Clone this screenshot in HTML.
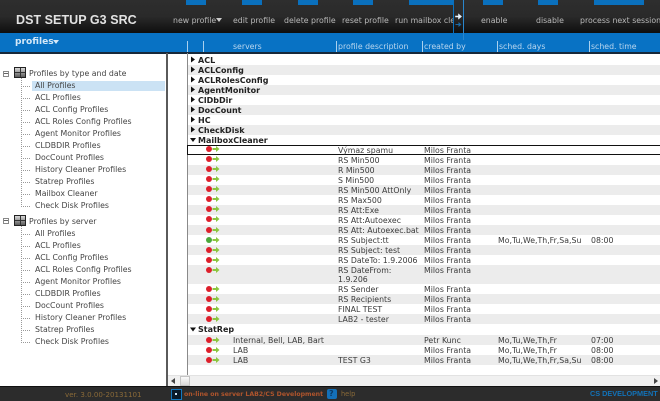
<!DOCTYPE html>
<html><head><meta charset="utf-8">
<style>
html,body{margin:0;padding:0;background:#fff}
#p{position:relative;width:660px;height:401px;overflow:hidden;background:#fff;font:7.8px/10px "DejaVu Sans",sans-serif;color:#3a3a3a}
#p div,#p span,#p svg{position:absolute}
.t{white-space:nowrap}
.n{color:#b8b8b8;top:16px;font-size:7.8px;line-height:10px;text-align:center;white-space:nowrap}
.tab{top:0;height:5px;background:#0a70bd}
.h{top:42px;color:#b9d6ee;font-size:7.8px;line-height:10px;white-space:nowrap}
.hl{top:41px;width:1px;height:11px;background:#a9d0ee}
.r{left:188px;width:472px;height:10px}
.g{background:#ececec}
.b{left:198px;font-weight:bold;color:#222;font-size:8px;line-height:10px;white-space:nowrap}
.c{white-space:nowrap;line-height:10px}
.s{left:35px;white-space:nowrap;line-height:10px;color:#444}
.dh{height:1px;width:10px;left:21px;background-image:linear-gradient(90deg,#999 50%,transparent 50%);background-size:2px 1px}
.dv{width:1px;left:21px;background-image:linear-gradient(#999 50%,transparent 50%);background-size:1px 2px}
.ic{width:10px;height:9px;background:linear-gradient(#333,#333) 4.500px 0/1px 9px no-repeat,linear-gradient(#333,#333) 0 4px/10px 1px no-repeat,linear-gradient(#d8d8d8,#5a5a5a);border:1px solid #222}
</style></head><body><div id="p">

<div style="left:0;top:0;width:660px;height:33px;background:linear-gradient(#2e2e2e 0,#2a2a2a 50%,#0e0e0e 100%)"></div>
<div class="tab" style="left:186px;width:20px"></div>
<div class="tab" style="left:242px;width:20px"></div>
<div class="tab" style="left:298px;width:20px"></div>
<div class="tab" style="left:353px;width:20px"></div>
<div class="tab" style="left:409px;width:44px"></div>
<div class="tab" style="left:483px;width:20px"></div>
<div class="tab" style="left:538px;width:20px"></div>
<div class="tab" style="left:594px;width:50px"></div>
<div class="t" style="left:16px;top:13px;color:#e2e2e2;font:bold 12.500px/14px 'Liberation Sans',sans-serif;letter-spacing:.05px">DST SETUP G3 SRC</div>
<div class="n" style="left:173px">new profile</div>
<svg style="left:216px;top:18px" width="6" height="4" viewBox="0 0 6 4"><path d="M0 0h6L3 4z" fill="#ccc"/></svg>
<div class="n" style="left:233px">edit profile</div>
<div class="n" style="left:284px">delete profile</div>
<div class="n" style="left:342px">reset profile</div>
<div class="n" style="left:395px;width:58px;overflow:hidden;text-align:left">run mailbox cleaner</div>
<div class="n" style="left:481px">enable</div>
<div class="n" style="left:536px">disable</div>
<div class="n" style="left:580px">process next session</div>

<div style="left:0;top:33px;width:660px;height:19px;background:#0872c4"></div>
<div style="left:0;top:52px;width:660px;height:1.500px;background:#17283a"></div>
<div style="left:453px;top:0;width:1px;height:33px;background:#0a70bd"></div>
<div style="left:463px;top:0;width:1px;height:40px;background:#2a86cc"></div>
<svg style="left:454px;top:12px" width="9" height="18" viewBox="0 0 9 18"><path d="M1.500 4h3V2l3 2.500-3 2.500V5h-3z" fill="#e8f4ff" stroke="#e8f4ff" stroke-width=".6"/><path d="M1.500 12h3v-2l3 2.500-3 2.500v-2h-3z" fill="#1b6aa5"/></svg>
<div class="t" style="left:15px;top:36px;color:#d4e8f8;font:bold 9.100px/12px 'DejaVu Sans',sans-serif">profiles</div>
<svg style="left:53px;top:40px" width="6" height="4" viewBox="0 0 6 4"><path d="M0 0h6L3 4z" fill="#d4e8f8"/></svg>
<div class="hl" style="left:187px"></div><div class="hl" style="left:203px"></div>
<div class="h" style="left:233px">servers</div>
<div class="hl" style="left:336px"></div><div class="h" style="left:338px">profile description</div>
<div class="hl" style="left:422px"></div><div class="h" style="left:424px">created by</div>
<div class="hl" style="left:497px"></div><div class="h" style="left:499px">sched. days</div>
<div class="hl" style="left:589px"></div><div class="h" style="left:591px">sched. time</div>

<!-- sidebar -->
<div style="left:166px;top:53px;width:2px;height:334px;background:#5a5a5a"></div>
<div style="left:32px;top:81px;width:133px;height:10px;background:#cbe2f4"></div>
<div style="left:3px;top:71px;width:4px;height:4px;border:1px solid #888;background:#fff"></div>
<div style="left:4px;top:73px;width:4px;height:1px;background:#666"></div>
<div style="left:3px;top:218px;width:4px;height:4px;border:1px solid #888;background:#fff"></div>
<div style="left:4px;top:220px;width:4px;height:1px;background:#666"></div>
<div class="ic" style="left:14px;top:67px"></div>
<div class="ic" style="left:14px;top:215px"></div>
<div class="s" style="left:29px;top:69px">Profiles by type and date</div>
<div class="s" style="left:29px;top:217px">Profiles by server</div>

<div class="dv" style="top:78px;height:128px"></div>
<div class="dv" style="top:226px;height:116px"></div>
<div class="dh" style="top:86px"></div><div class="s" style="top:81px">All Profiles</div>
<div class="dh" style="top:98px"></div><div class="s" style="top:93px">ACL Profiles</div>
<div class="dh" style="top:110px"></div><div class="s" style="top:105px">ACL Config Profiles</div>
<div class="dh" style="top:122px"></div><div class="s" style="top:117px">ACL Roles Config Profiles</div>
<div class="dh" style="top:134px"></div><div class="s" style="top:129px">Agent Monitor Profiles</div>
<div class="dh" style="top:146px"></div><div class="s" style="top:141px">CLDBDIR Profiles</div>
<div class="dh" style="top:158px"></div><div class="s" style="top:153px">DocCount Profiles</div>
<div class="dh" style="top:170px"></div><div class="s" style="top:165px">History Cleaner Profiles</div>
<div class="dh" style="top:182px"></div><div class="s" style="top:177px">Statrep Profiles</div>
<div class="dh" style="top:194px"></div><div class="s" style="top:189px">Mailbox Cleaner</div>
<div class="dh" style="top:206px"></div><div class="s" style="top:201px">Check Disk Profiles</div>

<div class="dh" style="top:234px"></div><div class="s" style="top:229px">All Profiles</div>
<div class="dh" style="top:246px"></div><div class="s" style="top:241px">ACL Profiles</div>
<div class="dh" style="top:258px"></div><div class="s" style="top:253px">ACL Config Profiles</div>
<div class="dh" style="top:270px"></div><div class="s" style="top:265px">ACL Roles Config Profiles</div>
<div class="dh" style="top:282px"></div><div class="s" style="top:277px">Agent Monitor Profiles</div>
<div class="dh" style="top:294px"></div><div class="s" style="top:289px">CLDBDIR Profiles</div>
<div class="dh" style="top:306px"></div><div class="s" style="top:301px">DocCount Profiles</div>
<div class="dh" style="top:318px"></div><div class="s" style="top:313px">History Cleaner Profiles</div>
<div class="dh" style="top:330px"></div><div class="s" style="top:325px">Statrep Profiles</div>
<div class="dh" style="top:342px"></div><div class="s" style="top:337px">Check Disk Profiles</div>

<!-- table -->
<div style="left:187px;top:53px;width:1px;height:322px;background:#8a8a8a"></div>
<div class="r g" style="top:65px"></div>
<div class="r g" style="top:85px"></div>
<div class="r g" style="top:105px"></div>
<div class="r g" style="top:125px"></div>
<div class="r g" style="top:165px"></div>
<div class="r g" style="top:185px"></div>
<div class="r g" style="top:205px"></div>
<div class="r g" style="top:225px"></div>
<div class="r g" style="top:245px"></div>
<div class="r g" style="top:265px;height:19px"></div>
<div class="r g" style="top:294px"></div>
<div class="r g" style="top:314px"></div>
<div class="r g" style="top:335px"></div>
<div class="r g" style="top:355px"></div>

<div class="b" style="top:56px">ACL</div>
<div class="b" style="top:66px">ACLConfig</div>
<div class="b" style="top:76px">ACLRolesConfig</div>
<div class="b" style="top:86px">AgentMonitor</div>
<div class="b" style="top:96px">ClDbDir</div>
<div class="b" style="top:106px">DocCount</div>
<div class="b" style="top:116px">HC</div>
<div class="b" style="top:126px">CheckDisk</div>
<div class="b" style="top:136px">MailboxCleaner</div>
<div class="b" style="top:325px">StatRep</div>
<svg style="left:189px;top:55px" width="8" height="290" viewBox="0 0 8 290" fill="#111"><path d="M2 1.500l4 3-4 3zM2 11.500l4 3-4 3zM2 21.500l4 3-4 3zM2 31.500l4 3-4 3zM2 41.500l4 3-4 3zM2 51.500l4 3-4 3zM2 61.500l4 3-4 3zM2 71.500l4 3-4 3zM1 83h6l-3 4zM1 272.500h6l-3 4z"/></svg>

<div style="left:187px;top:145px;width:473px;height:8px;border:1px solid #111;box-sizing:content-box"></div>

<div class="c" style="left:338px;top:146px">Výmaz spamu</div><div class="c" style="left:424px;top:146px">Milos Franta</div>
<div class="c" style="left:338px;top:156px">RS Min500</div><div class="c" style="left:424px;top:156px">Milos Franta</div>
<div class="c" style="left:338px;top:166px">R Min500</div><div class="c" style="left:424px;top:166px">Milos Franta</div>
<div class="c" style="left:338px;top:176px">S Min500</div><div class="c" style="left:424px;top:176px">Milos Franta</div>
<div class="c" style="left:338px;top:186px">RS Min500 AttOnly</div><div class="c" style="left:424px;top:186px">Milos Franta</div>
<div class="c" style="left:338px;top:196px">RS Max500</div><div class="c" style="left:424px;top:196px">Milos Franta</div>
<div class="c" style="left:338px;top:206px">RS Att:Exe</div><div class="c" style="left:424px;top:206px">Milos Franta</div>
<div class="c" style="left:338px;top:216px">RS Att:Autoexec</div><div class="c" style="left:424px;top:216px">Milos Franta</div>
<div class="c" style="left:338px;top:226px">RS Att: Autoexec.bat</div><div class="c" style="left:424px;top:226px">Milos Franta</div>
<div class="c" style="left:338px;top:236px">RS Subject:tt</div><div class="c" style="left:424px;top:236px">Milos Franta</div><div class="c" style="left:498px;top:236px">Mo,Tu,We,Th,Fr,Sa,Su</div><div class="c" style="left:591px;top:236px">08:00</div>
<div class="c" style="left:338px;top:246px">RS Subject: test</div><div class="c" style="left:424px;top:246px">Milos Franta</div>
<div class="c" style="left:338px;top:256px">RS DateTo: 1.9.2006</div><div class="c" style="left:424px;top:256px">Milos Franta</div>
<div class="c" style="left:338px;top:266px">RS DateFrom:</div><div class="c" style="left:338px;top:275px">1.9.206</div><div class="c" style="left:424px;top:266px">Milos Franta</div>
<div class="c" style="left:338px;top:285px">RS Sender</div><div class="c" style="left:424px;top:285px">Milos Franta</div>
<div class="c" style="left:338px;top:295px">RS Recipients</div><div class="c" style="left:424px;top:295px">Milos Franta</div>
<div class="c" style="left:338px;top:305px">FINAL TEST</div><div class="c" style="left:424px;top:305px">Milos Franta</div>
<div class="c" style="left:338px;top:315px">LAB2 - tester</div><div class="c" style="left:424px;top:315px">Milos Franta</div>

<div class="c" style="left:233px;top:336px">Internal, Bell, LAB, Bart</div><div class="c" style="left:424px;top:336px">Petr Kunc</div><div class="c" style="left:498px;top:336px">Mo,Tu,We,Th,Fr</div><div class="c" style="left:591px;top:336px">07:00</div>
<div class="c" style="left:233px;top:346px">LAB</div><div class="c" style="left:424px;top:346px">Milos Franta</div><div class="c" style="left:498px;top:346px">Mo,Tu,We,Th,Fr</div><div class="c" style="left:591px;top:346px">08:00</div>
<div class="c" style="left:233px;top:356px">LAB</div><div class="c" style="left:338px;top:356px">TEST G3</div><div class="c" style="left:424px;top:356px">Milos Franta</div><div class="c" style="left:498px;top:356px">Mo,Tu,We,Th,Fr,Sa,Su</div><div class="c" style="left:591px;top:356px">08:00</div>

<svg style="left:205px;top:145px" width="16" height="225" viewBox="0 0 16 225">
<defs><g id="x"><path d="M7.500 3h3.500V1l3.500 3-3.500 3V5H7.500z" fill="#8cc63f"/></g></defs>
<circle cx="4" cy="4" r="3" fill="#dd1f2b"/><use href="#x" y="0"/>
<circle cx="4" cy="14" r="3" fill="#dd1f2b"/><use href="#x" y="10"/>
<circle cx="4" cy="24" r="3" fill="#dd1f2b"/><use href="#x" y="20"/>
<circle cx="4" cy="34" r="3" fill="#dd1f2b"/><use href="#x" y="30"/>
<circle cx="4" cy="44" r="3" fill="#dd1f2b"/><use href="#x" y="40"/>
<circle cx="4" cy="54" r="3" fill="#dd1f2b"/><use href="#x" y="50"/>
<circle cx="4" cy="64" r="3" fill="#dd1f2b"/><use href="#x" y="60"/>
<circle cx="4" cy="74" r="3" fill="#dd1f2b"/><use href="#x" y="70"/>
<circle cx="4" cy="85" r="3" fill="#dd1f2b"/><use href="#x" y="81"/>
<circle cx="4" cy="95" r="3" fill="#4aa83a"/><use href="#x" y="91"/>
<circle cx="4" cy="105" r="3" fill="#dd1f2b"/><use href="#x" y="101"/>
<circle cx="4" cy="115" r="3" fill="#dd1f2b"/><use href="#x" y="111"/>
<circle cx="4" cy="125" r="3" fill="#dd1f2b"/><use href="#x" y="121"/>
<circle cx="4" cy="144" r="3" fill="#dd1f2b"/><use href="#x" y="140"/>
<circle cx="4" cy="154" r="3" fill="#dd1f2b"/><use href="#x" y="150"/>
<circle cx="4" cy="164" r="3" fill="#dd1f2b"/><use href="#x" y="160"/>
<circle cx="4" cy="174" r="3" fill="#dd1f2b"/><use href="#x" y="170"/>
<circle cx="4" cy="195" r="3" fill="#dd1f2b"/><use href="#x" y="191"/>
<circle cx="4" cy="205" r="3" fill="#dd1f2b"/><use href="#x" y="201"/>
<circle cx="4" cy="215" r="3" fill="#dd1f2b"/><use href="#x" y="211"/>
</svg>

<!-- scrollbar -->
<div style="left:168px;top:375px;width:492px;height:12px;background:#f0f0f0;border-top:1px solid #e2e2e2;box-sizing:border-box"></div>
<div style="left:180px;top:376px;width:10px;height:10px;background:linear-gradient(#fafafa,#d8d8d8);border:1px solid #c4c4c4;box-sizing:border-box"></div>
<svg style="left:171px;top:378px" width="4" height="6" viewBox="0 0 4 6"><path d="M4 0v6L0 3z" fill="#444"/></svg>
<svg style="left:654px;top:378px" width="4" height="6" viewBox="0 0 4 6"><path d="M0 0v6l4-3z" fill="#444"/></svg>

<!-- footer -->
<div style="left:0;top:386px;width:660px;height:15px;background:#2c2c2c;border-top:1px solid #111;box-sizing:border-box"></div>
<div class="t" style="left:65px;top:390px;color:#8a6a38;font-size:7.100px;line-height:9px">ver. 3.0.00-20131101</div>
<div style="left:171px;top:389px;width:9px;height:9px;background:#0a1a2a;border:1px solid #1478c0"></div>
<div style="left:175px;top:393px;width:2px;height:2px;background:#cfe6f8"></div>
<div class="t" style="left:184px;top:390px;color:#b0552c;font:bold 6.200px/9px 'DejaVu Sans',sans-serif">on-line on server LAB2/CS Development</div>
<div style="left:327px;top:389px;width:10px;height:10px;background:#1470b8;border-radius:2px"></div>
<div class="t" style="left:329px;top:389px;color:#0a3a66;font:bold 8px/10px 'DejaVu Sans',sans-serif">?</div>
<div class="t" style="left:341px;top:390px;color:#8a6a38;font-size:6.600px;line-height:9px">help</div>
<div class="t" style="left:590px;top:389px;color:#1272b8;font:bold 7.300px/10px 'Liberation Sans',sans-serif">CS DEVELOPMENT</div>
</div></body></html>
